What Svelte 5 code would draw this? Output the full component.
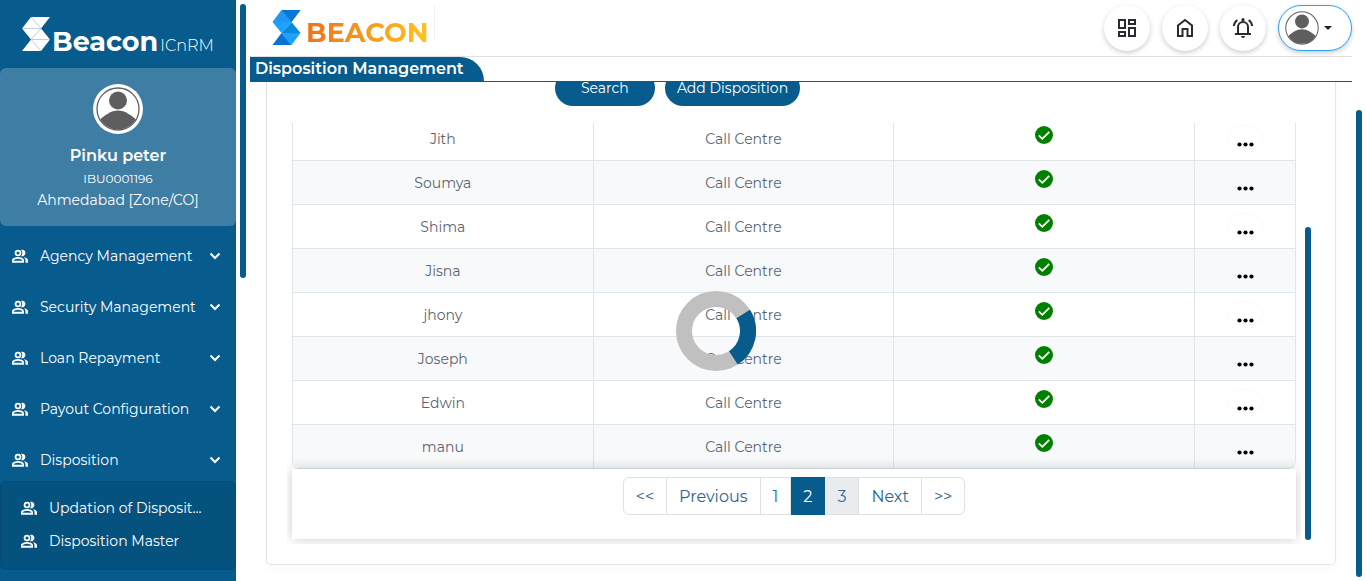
<script>
  const menu = ['Agency Management', 'Security Management', 'Loan Repayment', 'Payout Configuration', 'Disposition'];
  const submenu = ['Updation of Disposit...', 'Disposition Master'];
  const rows = ['Jith', 'Soumya', 'Shima', 'Jisna', 'jhony', 'Joseph', 'Edwin', 'manu'];
  const pages = ['<<', 'Previous', '1', '2', '3', 'Next', '>>'];
</script>

{#snippet people()}
  <svg class="people" viewBox="0 0 24 24" aria-hidden="true">
    <path fill="currentColor" d="M9 2.500a5 5 0 1 0 0 10 5 5 0 0 0 0-10Zm0 2.700a2.300 2.300 0 1 1 0 4.600 2.300 2.300 0 0 1 0-4.600ZM15 2.500c-.6 0-1.100.1-1.600.3a6.500 6.500 0 0 1 0 9.400A5 5 0 1 0 15 2.500ZM9 13.400c-3 0-9 1.500-9 4.800V22h18v-3.800c0-3.300-6-4.800-9-4.800Zm0 2.700c2.700 0 5.900 1.100 6.400 2.300v.900H2.600v-.900c.5-1.200 3.700-2.300 6.400-2.300ZM17.600 13.700c1.500 1 2.600 2.500 2.600 4.500V22H24v-3.800c0-2.600-3.500-4-6.400-4.500Z" />
  </svg>
{/snippet}

{#snippet avatar()}
  <svg class="avatar" viewBox="0 0 44 44" aria-hidden="true">
    <clipPath id="face"><circle cx="22" cy="22" r="20.500" /></clipPath>
    <circle cx="22" cy="22" r="21" fill="#fff" stroke="#5e5e5e" stroke-width="1.300" />
    <g clip-path="url(#face)" fill="#5e5e5e">
      <circle cx="22" cy="13.500" r="9" />
      <path d="M1 35C9 28 15 23.500 22 23.500S35 28 43 35V44H1Z" />
    </g>
  </svg>
{/snippet}

<div class="app">
  <aside>
    <div class="brand">
      <svg class="mark" viewBox="0 0 28 34" aria-hidden="true">
        <path fill="#fff" d="M9 0H28L19 11.500 28 22.500 19 34H0L9 22.500 0 11.500Z" />
        <path fill="none" stroke="#9dbbd3" stroke-width=".7" d="M0 11.500H19M9 22.500H28M9 0 19 11.500 9 22.500 19 34" />
      </svg>
      <strong>Beacon</strong><span>ICnRM</span>
    </div>
    <div class="profile">
      <div class="ring">{@render avatar()}</div>
      <b>Pinku peter</b>
      <small>IBU0001196</small>
      <span>Ahmedabad [Zone/CO]</span>
    </div>
    <nav>
      {#each menu as item}
        <button class="item">
          {@render people()}
          <span>{item}</span>
          <svg class="chev" viewBox="0 0 12 12" aria-hidden="true"><path d="M1.500 3.500 6 8l4.500-4.500" fill="none" stroke="currentColor" stroke-width="2" /></svg>
        </button>
      {/each}
      <div class="sub">
        {#each submenu as item}
          <a href="#top">{@render people()}<span>{item}</span></a>
        {/each}
      </div>
    </nav>
  </aside>
  <div class="rail side"></div>

  <main>
    <header>
      <div class="logo">
        <svg viewBox="0 0 28 35" aria-hidden="true">
          <path fill="#2196f3" d="M9 0H28L19 12H9Z" /><path fill="#0878d8" d="M9 0H28L19 12Z" />
          <path fill="#2196f3" d="M9 0 19 12H0Z" /><path fill="#0789dc" d="M9 23 19 12 28 23Z" />
          <path fill="#1ea0ff" d="M0 12H19L9 23Z" /><path fill="#1ea0ff" d="M9 23H28L19 35Z" />
          <path fill="#0674d6" d="M9 23 19 35H0Z" />
        </svg>
        <strong>BEACON</strong>
      </div>
      <div class="tools">
        <button class="round" aria-label="Dashboard">
          <svg viewBox="0 0 24 24" fill="none" stroke="#2b2a33" stroke-width="2"><path d="M4 4h6v8H4ZM14 4h6v4h-6ZM14 12h6v8h-6ZM4 16h6v4H4Z" /></svg>
        </button>
        <button class="round" aria-label="Home">
          <svg viewBox="0 0 24 24" fill="none" stroke="#2b2a33" stroke-width="2"><path d="M5 20V9.500L12 4l7 5.500V20h-4.500v-7h-5v7Z" /></svg>
        </button>
        <button class="round" aria-label="Notifications">
          <svg viewBox="0 0 24 24" fill="none" stroke="#2b2a33" stroke-width="2"><path d="M4 18h16M7 18v-7a5 5 0 0 1 10 0v7M2.800 10a8.500 8.500 0 0 1 3.500-6M21.200 10a8.500 8.500 0 0 0-3.500-6" /><path d="M10.500 5V3.500a1.500 1.500 0 0 1 3 0V5ZM10 20h4a2 2 0 0 1-4 0Z" fill="#2b2a33" stroke="none" /></svg>
        </button>
        <button class="user" aria-label="Account">{@render avatar()}<i></i></button>
      </div>
    </header>
    <div class="title"><h1>Disposition Management</h1></div>

    <div class="body">
      <section class="card">
        <div class="actions">
          <button>Search</button>
          <button>Add Disposition</button>
        </div>
        <div class="scroller">
          <div class="list">
            <div class="clip">
              <table>
                <tbody>
                  {#each rows as name}
                    <tr>
                      <td>{name}</td>
                      <td>Call Centre</td>
                      <td><svg class="ok" viewBox="0 0 18 18" role="img" aria-label="Active"><circle cx="9" cy="9" r="9" fill="#008000" /><path d="M3.800 9.300 7.300 12.800 14.300 5.800" fill="none" stroke="#fff" stroke-width="1.800" /></svg></td>
                      <td><button class="more" aria-label="More"><svg viewBox="0 0 17 5"><circle cx="2.500" cy="2.500" r="2.100" /><circle cx="8.500" cy="2.500" r="2.100" /><circle cx="14.500" cy="2.500" r="2.100" /></svg></button></td>
                    </tr>
                  {/each}
                </tbody>
              </table>
            </div>
            <div class="foot">
              <div class="pager">
                {#each pages as p}
                  <button class:on={p === '2'} class:hover={p === '3'}>{p}</button>
                {/each}
              </div>
            </div>
          </div>
          <div class="rail inner"></div>
        </div>
      </section>
    </div>
  </main>
  <div class="rail page"></div>

  <svg class="spinner" viewBox="0 0 80 80" role="img" aria-label="Loading">
    <circle cx="40" cy="40" r="32" fill="none" stroke="#c0c0c0" stroke-width="16" />
    <path d="M67.200 23.100A32 32 0 0 1 57.400 66.900" fill="none" stroke="#075b8d" stroke-width="16" />
  </svg>
</div>

<style>
  :global(body) { margin: 0; background: #fff; }
  .app, .app * { box-sizing: border-box; }
  .app { display: flex; height: 100vh; overflow: hidden; position: relative; font-family: Montserrat, Inter, sans-serif; font-size: 14px; color: #5a6470; }
  button { font: inherit; color: inherit; background: none; border: 0; padding: 0; margin: 0; cursor: pointer; }
  svg { display: block; flex: none; }

  aside { flex: 0 0 236px; background: #075b8d; color: #fff; }
  .brand { height: 68px; padding: 17px 0 0 22px; display: flex; align-items: flex-start; line-height: 50px; }
  .mark { width: 28px; height: 34px; }
  .brand strong { font-size: 27px; margin-left: 2px; }
  .brand span { font-size: 16px; font-weight: 300; margin: 4px 0 0 2px; }
  .profile { height: 158px; border-radius: 6px; background: #3e7da4; display: flex; flex-direction: column; align-items: center; padding-top: 16px; }
  .ring { width: 50px; height: 50px; border-radius: 50%; background: #fff; padding: 3px; }
  .ring .avatar { width: 44px; height: 44px; }
  .profile b { font-size: 16px; font-weight: 600; line-height: 24px; margin-top: 10px; }
  .profile small { font-size: 12px; line-height: 22px; }
  .profile span { line-height: 20px; }
  nav { padding-top: 4px; }
  .item { display: flex; width: 100%; height: 51px; align-items: center; padding: 0 15px 0 12px; text-align: left; }
  .people { width: 16px; height: 16px; }
  .item span { flex: 1; margin-left: 12px; }
  .chev { width: 12px; height: 12px; }
  .sub { height: 89px; margin-top: -4px; border: 1px solid #054b75; border-radius: 6px; background: #06527f; padding: 9px 24px 0 20px; }
  .sub a { display: flex; align-items: center; height: 33px; color: #fff; text-decoration: none; }
  .sub span { margin-left: 12px; white-space: nowrap; }

  .rail { flex: none; width: 6px; border-radius: 3px; background: #075b8d; }
  .side { height: 274px; margin: 4px 4px 0; }
  .page { margin: 110px 4px 4px; }

  main { flex: 1; min-width: 0; display: flex; flex-direction: column; }
  header { height: 57px; flex: none; border-bottom: 1px solid #e0e0e0; display: flex; justify-content: space-between; padding-left: 22px; }
  .logo { display: flex; align-self: flex-start; height: 34px; margin-top: 6px; padding: 4px 5px 0 0; border-right: 1px solid #eee; }
  .logo svg { width: 29px; height: 35px; }
  .logo strong { margin-left: 5px; font-size: 27px; line-height: 46px; height: 46px; background: linear-gradient(90deg, #ee7219, #ffc321); background-clip: text; color: transparent; }
  .tools { display: flex; gap: 12px; padding-top: 5px; }
  .round { width: 46px; height: 46px; border-radius: 50%; background: #fff; box-shadow: 0 2px 5px #0003; display: grid; place-items: center; }
  .round svg { width: 24px; height: 24px; }
  .user { width: 74px; height: 46px; border: 1px solid #2aa0f5; border-radius: 23px; background: #fff; box-shadow: 0 2px 5px #0003; display: flex; align-items: center; padding-left: 6px; gap: 5px; }
  .user .avatar { width: 34px; height: 34px; }
  .user i { border: 4px solid transparent; border-top-color: #222; border-bottom: 0; }
  .title { flex: none; border-bottom: 1px solid #075b8d; height: 25px; display: flex; }
  h1 { margin: 0; width: 234px; padding-left: 5px; line-height: 24px; font-size: 16px; font-weight: 600; color: #fff; white-space: nowrap; background: #075b8d; border-radius: 0 24px 0 0; }

  .body { flex: 1; overflow: hidden; padding: 0 16px; }
  .card { border: 1px solid #dee6eb; border-top: 0; border-radius: 0 0 5px 5px; padding: 0 24px 20px 20px; box-shadow: 0 6px 10px #00000005; }
  .actions { display: flex; justify-content: center; gap: 10px; margin-top: -12px; padding-right: 243px; }
  .actions button { min-width: 100px; height: 36px; padding: 0 12px; border-radius: 18px; background: #075b8d; color: #fff; }
  .scroller { display: flex; margin-top: 17px; }
  .list { flex: 1; min-width: 0; overflow: hidden; padding: 0 5px 5px; }
  .clip { overflow: hidden; }
  table { width: 100%; table-layout: fixed; border-collapse: separate; border-spacing: 0; margin-top: -6px; border-left: 1px solid #dee6e9; border-radius: 0 0 8px 8px; overflow: hidden; }
  td { height: 44px; padding: 0; text-align: center; border: solid #dee6e9; border-width: 0 1px 1px 0; font-weight: 400; }
  td:last-child { width: 101px; }
  tr:last-child td:last-child { border-bottom-right-radius: 8px; }
  tr:nth-child(even) { background: #f7f9fb; }
  .ok { width: 18px; height: 18px; margin: 0 auto 7px; }
  .more { display: block; width: 36px; height: 25px; margin: 0 auto 2px; padding-top: 8px; border: 1px solid #f9f9fa; border-radius: 50%; }
  .more svg { width: 17px; height: 5px; margin: 5px auto 0; fill: #000; }
  .foot { position: relative; height: 70px; padding-top: 8px; background: #fff; box-shadow: 0 0 12px #00000033; display: flex; justify-content: center; align-items: flex-start; }
  .pager { display: flex; font-size: 16px; color: #2c6693; }
  .pager button { height: 38px; padding: 0 12px; border: 1px solid #dee2e6; border-left-width: 0; }
  .pager button:first-child { border-left-width: 1px; border-radius: 6px 0 0 6px; }
  .pager button:last-child { border-radius: 0 6px 6px 0; }
  .pager .on { background: #075b8d; border-color: #075b8d; color: #fff; }
  .pager .hover { background: #e9ecef; }
  .inner { margin: 104px 0 4px 4px; }
  .spinner { position: absolute; width: 80px; height: 80px; left: calc(50% + 33px); top: calc(50% + 40px); transform: translate(-50%, -50%); }
</style>
